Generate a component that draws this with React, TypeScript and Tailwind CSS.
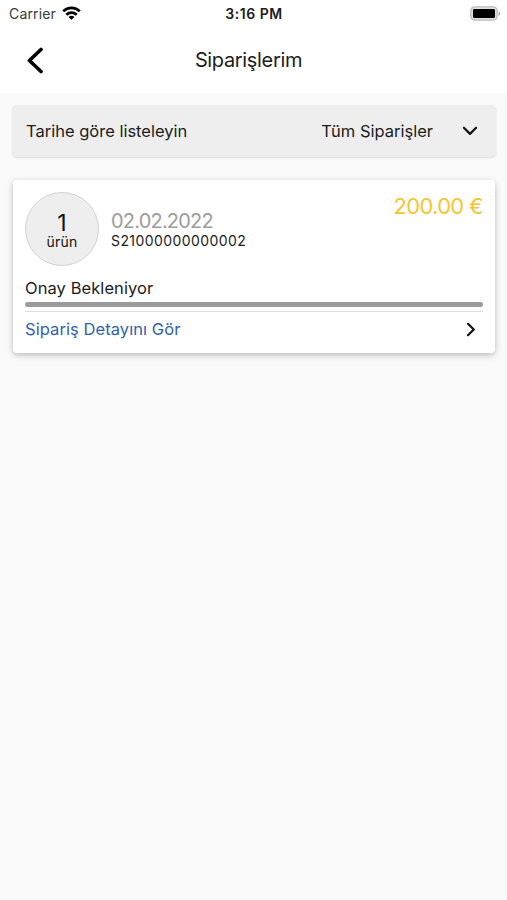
import React from 'react';

const orders = [
  { id: 'S21000000000002', date: '02.02.2022', count: 1, total: '200.00 €', status: 'Onay Bekleniyor' },
];

function StatusBar() {
  return (
    <div className="grid h-7 grid-cols-3 items-center pl-[9px] pr-[6px]">
      <div className="flex items-center gap-[6px]">
        <span className="text-[14px] leading-none text-[#3a3a3a] tracking-[0.16px]">Carrier</span>
        <svg width="19" height="14" viewBox="0 0 19 14" className="-mt-[3px]" fill="none" stroke="#000" strokeWidth="2.7">
          <path d="M1.2 5.3C5.8 0.6 13.2 0.6 17.8 5.3" />
          <path d="M4.3 8.7C7.2 5.9 11.8 5.9 14.7 8.7" />
          <path d="M9.5 13.8L6.6 10.9C8.3 9.4 10.7 9.4 12.4 10.9Z" fill="#000" stroke="none" />
        </svg>
      </div>
      <span className="-ml-[2px] text-center text-[14px] font-semibold leading-none tracking-[0.55px] text-[#1c1c1c]">3:16 PM</span>
      <svg width="31" height="15" viewBox="0 0 31 15" className="-mt-[2px] justify-self-end">
        <rect x="0.8" y="0.8" width="26.4" height="13.4" rx="4" fill="#e0e0e0" stroke="#bdbdbd" strokeWidth="1.3" />
        <rect x="3" y="3" width="22" height="9" rx="1.2" fill="#000" />
        <path d="M28.6 5.2C30.6 6 30.6 9 28.6 9.8Z" fill="#a8a8a8" />
      </svg>
    </div>
  );
}

function Header() {
  return (
    <header className="grid h-[65px] grid-cols-[60px_1fr_60px] items-center">
      <button className="flex pl-[26px]" aria-label="Geri">
        <svg width="18" height="27" viewBox="0 0 18 27" className="-mt-px" fill="none" stroke="#000" strokeWidth="3.6" strokeLinecap="round" strokeLinejoin="round">
          <path d="M15 2.5L3.4 13.5L15 24.5" />
        </svg>
      </button>
      <h1 className="-mt-px pr-[10px] text-center text-[20px] leading-none tracking-[-0.34px] text-[#1c1c1c]">Siparişlerim</h1>
    </header>
  );
}

function FilterBar() {
  return (
    <div className="ml-3 mr-[11px] mt-3 flex h-[52px] items-center rounded-[5px] bg-[#eeeeee] pl-[14px] pr-[18px] text-[16.5px] text-[#1c1c1c] shadow-[0_1px_2px_rgba(0,0,0,0.12)]">
      <span className="flex-1">Tarihe göre listeleyin</span>
      <button className="flex items-center">
        <span className="mr-[29px]">Tüm Siparişler</span>
        <svg width="16" height="10" viewBox="0 0 16 10" fill="none" stroke="#111" strokeWidth="2.2" strokeLinecap="round" strokeLinejoin="round">
          <path d="M1.9 1.8L8 7.9L14.1 1.8" />
        </svg>
      </button>
    </div>
  );
}

function OrderCard({ order }: { order: (typeof orders)[number] }) {
  return (
    <article className="ml-[13px] mr-3 h-[173px] rounded-[4px] bg-white px-3 pt-3 shadow-[0_2px_6px_rgba(0,0,0,0.26)]">
      <div className="flex">
        <div className="flex h-[74px] w-[74px] flex-col items-center rounded-full border border-[#d2d2d2] bg-[#eeeeee] pt-[18px] text-[#111]">
          <span className="text-[23px] leading-[24px]">{order.count}</span>
          <span className="text-[14px] leading-[14px] tracking-[0.2px]">ürün</span>
        </div>
        <div className="ml-3 flex flex-1 flex-col pt-[18px]">
          <span className="text-[20px] leading-[22px] tracking-[-0.8px] text-[#9c9c9c]">{order.date}</span>
          <span className="text-[14px] leading-[18px] tracking-[0.42px] text-[#1c1c1c]">{order.id}</span>
        </div>
        <span className="text-[22px] leading-[28px] tracking-[-0.7px] text-[#f7c52d]">{order.total}</span>
      </div>
      <p className="mt-[12px] text-[16.5px] leading-[20px] tracking-[0.07px] text-[#1c1c1c]">{order.status}</p>
      <div className="mt-[4px] h-[5px] rounded-full bg-[#9b9b9b]" />
      <div className="mt-[4px] h-px bg-[#dedede]" />
      <button className="flex h-[35px] w-full items-center justify-between pr-[7px] text-[16.5px] tracking-[0.07px] text-[#2f62ad]">
        <span>Sipariş Detayını Gör</span>
        <svg width="10" height="15" viewBox="0 0 10 15" fill="none" stroke="#111" strokeWidth="2.2" strokeLinecap="round" strokeLinejoin="round">
          <path d="M2 1.8L7.8 7.5L2 13.2" />
        </svg>
      </button>
    </article>
  );
}

export default function App() {
  return (
    <div className="min-h-screen w-full bg-[#fafafa] font-['Inter',sans-serif]">
      <div className="bg-white">
        <StatusBar />
        <Header />
      </div>
      <FilterBar />
      <div className="mt-[23px]">
        {orders.map((order) => (
          <OrderCard key={order.id} order={order} />
        ))}
      </div>
    </div>
  );
}
